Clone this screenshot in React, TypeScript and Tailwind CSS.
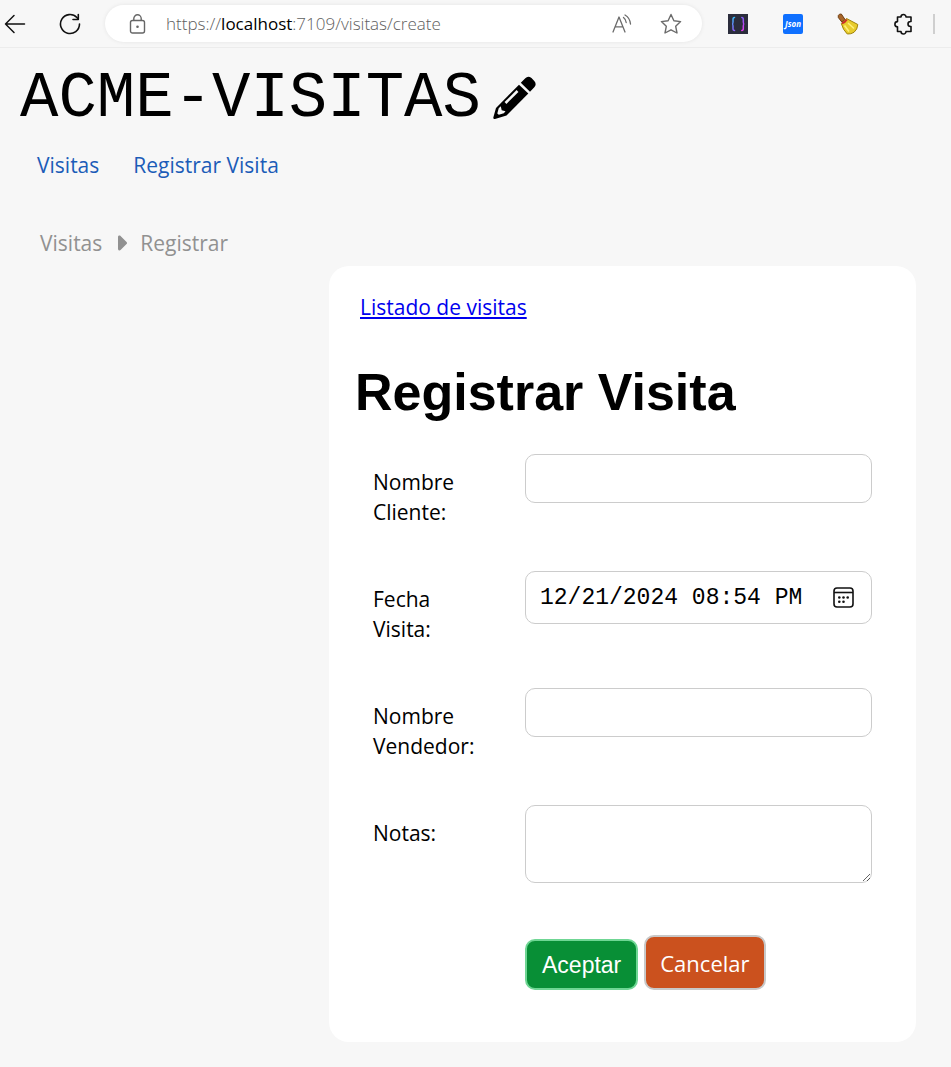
import React from "react";
import { FaCaretRight } from "react-icons/fa6";

function PencilIcon() {
  return (
    <svg className="ml-3 size-[43px]" viewBox="0 0 43 43" fill="none">
      <path d="M26 8.700 35.300 17.500 13.500 39.500 2 42.900Q0 43.300.400 41.300L3 32z" fill="#000" />
      <path d="M27.800 6.800 32.300 2.200Q35-.700 38.500 2L41.300 5Q44 8.200 41.300 11.200L37 15.700z" fill="#000" />
      <path d="M12.500 27 24.500 15" stroke="#f7f7f7" strokeWidth="2.600" />
      <path d="M5.700 32.300 7.800 30.300 8.700 34.300 12.500 35.300 10.800 37.300 5.800 38.800 4.300 37.500z" fill="#f7f7f7" />
    </svg>
  );
}

function BackIcon() {
  return (
    <svg width="22" height="22" viewBox="0 0 22 22" fill="none" stroke="#111" strokeWidth="1.5" strokeLinecap="round" strokeLinejoin="round">
      <path d="M20.5 11H1.5M10 2.5 1.5 11l8.500 8.500" />
    </svg>
  );
}

function ReloadIcon() {
  return (
    <svg width="22" height="22" viewBox="0 0 22 22" fill="none" stroke="#111" strokeWidth="1.6" strokeLinecap="round" strokeLinejoin="round">
      <path d="M20.500 11a9.500 9.500 0 1 1-2.600-6.500l1.300 1.500" />
      <path d="M19.300 1.500V6.500H14" />
    </svg>
  );
}

function LockIcon() {
  return (
    <svg width="17" height="20" viewBox="0 0 17 20" fill="none" stroke="#666" strokeWidth="1.400">
      <rect x="1.500" y="6.500" width="14" height="12.500" rx="2" />
      <path d="M4.800 6.500V4.500a3.700 3.700 0 0 1 7.400 0v2" />
      <circle cx="8.500" cy="12.700" r="1.300" fill="#666" stroke="none" />
    </svg>
  );
}

function ReadAloudIcon() {
  return (
    <svg width="20" height="20" viewBox="0 0 20 20" fill="none" stroke="#6b6b6b" strokeWidth="1.300" strokeLinecap="round" strokeLinejoin="round">
      <path d="M1 18 7 3l6 15M3.200 12.800h7.600" />
      <path d="M11.500 3.500c1.600 1.200 2.500 2.800 2.700 5M13 1c3.400 2 5.200 5 5.500 9" />
    </svg>
  );
}

function StarIcon() {
  return (
    <svg width="22" height="22" viewBox="0 0 22 22" fill="none" stroke="#6b6b6b" strokeWidth="1.400" strokeLinejoin="round">
      <path d="M11 1.500l2.900 6.200 6.700.9-4.900 4.700 1.300 6.700L11 16.800 5 20l1.300-6.700L1.400 8.600l6.700-.9z" />
    </svg>
  );
}

function BracesIcon() {
  return (
    <svg width="20" height="20" viewBox="0 0 20 20" fill="none" strokeWidth="1.500" strokeLinecap="round">
      <defs>
        <linearGradient id="braceLeft" x1="0" y1="3" x2="0" y2="17" gradientUnits="userSpaceOnUse">
          <stop offset="0" stopColor="#38bdf8" />
          <stop offset="1" stopColor="#8b5cf6" />
        </linearGradient>
        <linearGradient id="braceRight" x1="0" y1="3" x2="0" y2="17" gradientUnits="userSpaceOnUse">
          <stop offset="0" stopColor="#7c5cf6" />
          <stop offset="1" stopColor="#e935f0" />
        </linearGradient>
      </defs>
      <rect width="20" height="20" fill="#2b2d3c" />
      <path stroke="url(#braceLeft)" d="M6.500 3.500C5 3.500 5 4.500 5 5.500v2.500c0 1.200-.5 2-1 2 .5 0 1 .8 1 2v2.500c0 1 0 2 1.500 2" />
      <path stroke="url(#braceRight)" d="M13.800 3.500c1.500 0 1.500 1 1.500 2v2.500c0 1.200.5 2 1 2-.5 0-1 .8-1 2v2.500c0 1 0 2-1.500 2" />
    </svg>
  );
}

function BroomIcon() {
  return (
    <svg width="22" height="22" viewBox="0 0 22 22" strokeLinejoin="round">
      <path d="M1.300 2.500Q2 .8 4.300 1L8 6.500 4.800 9 1.300 4.500z" fill="#a8662a" stroke="#6e3f12" strokeWidth="1" />
      <path d="M4.300 10.500 9.500 5.500 20.800 11.500Q20.500 16.500 17 19.300 14 21.300 10.300 21 6 17 4.300 10.500z" fill="#e8cc2c" stroke="#a1840c" strokeWidth="1" />
      <path d="M7.500 12.500l4.500 6M11 10l6 5.500" fill="none" stroke="#fff07a" strokeWidth="1.600" />
      <path d="M5 10.300 Q8 9.500 9.800 6.500" fill="none" stroke="#c9302a" strokeWidth="2" />
    </svg>
  );
}

function PuzzleIcon() {
  return (
    <svg width="21" height="22" viewBox="0 0 21 22" fill="none" stroke="#111" strokeWidth="1.600" strokeLinejoin="round">
      <path d="M4.500 4H8a2.500 2.500 0 0 1 5 0h5v4.500h-.5a2.500 2.500 0 0 0 0 5H18V18.500h-5a2.500 2.500 0 0 1-5 0H4.500v-4.700a2.600 2.600 0 0 1 0-5.200z" />
    </svg>
  );
}

function CalendarIcon() {
  return (
    <svg width="21" height="21" viewBox="0 0 21 21" fill="none" stroke="#111" strokeWidth="1.600">
      <rect x="1" y="1" width="19" height="19" rx="3" />
      <path d="M1 5.500h19" />
      <g fill="#111" stroke="none">
        <circle cx="6.300" cy="10.500" r="1.300" />
        <circle cx="10.500" cy="10.500" r="1.300" />
        <circle cx="14.700" cy="10.500" r="1.300" />
        <circle cx="6.300" cy="14.700" r="1.300" />
        <circle cx="10.500" cy="14.700" r="1.300" />
      </g>
    </svg>
  );
}

function BrowserBar() {
  return (
    <header className="flex h-12 items-center border-b border-[#ececec] pl-1">
      <button type="button" aria-label="Back"><BackIcon /></button>
      <button type="button" aria-label="Refresh" className="ml-[33px]"><ReloadIcon /></button>
      <div className="ml-6 flex h-[37px] flex-1 items-center rounded-full bg-white pr-5 pl-6 shadow-[0_0_4px_rgba(0,0,0,0.08)]">
        <LockIcon />
        <div className="ml-5 flex-1 text-[17px] font-light text-[#606060]">
          https://<span className="font-normal text-black">localhost</span>:7109/visitas/create
        </div>
        <button type="button" aria-label="Read aloud"><ReadAloudIcon /></button>
        <button type="button" aria-label="Favorite" className="ml-7"><StarIcon /></button>
      </div>
      <div className="ml-[26px] flex items-center">
        <button type="button" aria-label="Braces extension"><BracesIcon /></button>
        <button type="button" className="ml-[35px] h-5 w-5 rounded-xs bg-[#0f70ff] text-center font-['Open_Sans',sans-serif] text-[8px] leading-5 font-bold text-white italic">Json</button>
        <button type="button" aria-label="Clean" className="ml-[34px]"><BroomIcon /></button>
        <button type="button" aria-label="Extensions" className="ml-[34px]"><PuzzleIcon /></button>
        <div className="mr-4 ml-[19px] h-5 w-0.5 bg-[#cfcfcf]" />
      </div>
    </header>
  );
}

function Field({ id, label, children }: { id: string; label: string; children: React.ReactNode }) {
  return (
    <div className="flex items-start">
      <label htmlFor={id} className="w-[152px] shrink-0 pt-[13px] pr-8">{label}</label>
      <div className="flex min-w-0 flex-1">{children}</div>
    </div>
  );
}

export default function App() {
  return (
    <div className="min-h-screen bg-[#f7f7f7] pb-6 font-['Open_Sans','Noto_Sans',sans-serif] text-[21px] leading-[30px] text-black">
      <BrowserBar />
      <div className="flex items-center pt-[15px] pl-5">
        <span className="pt-1 font-['Liberation_Mono',monospace] text-[64px] leading-[64px]">ACME-VISITAS</span>
        <PencilIcon />
      </div>
      <nav className="mt-[19px] flex gap-[34px] pl-[37px] text-[#1b5cb8]">
        <a href="#visitas">Visitas</a>
        <a href="#registrar">Registrar Visita</a>
      </nav>
      <div className="mt-12 flex items-center gap-[7px] pl-10 text-[#919191]">
        <span>Visitas</span>
        <FaCaretRight className="size-6" />
        <span>Registrar</span>
      </div>
      <main className="mt-2 mr-[35px] ml-[329px] rounded-[20px] bg-white pt-[26px] pb-[52px]">
        <a href="#listado" className="ml-[31px] text-[#0000ee] underline">Listado de visitas</a>
        <h1 className="mt-10 ml-[26px] font-['Liberation_Sans',sans-serif] text-[52px] leading-[60px] font-bold">Registrar Visita</h1>
        <form className="mt-8 px-11" onSubmit={(e) => e.preventDefault()}>
          <div className="flex flex-col gap-11">
            <Field id="cliente" label="Nombre Cliente:">
              <input id="cliente" type="text" className="h-[49px] w-full rounded-[10px] border border-[#cccccc] px-3.5" />
            </Field>
            <Field id="fecha" label="Fecha Visita:">
              <div className="flex h-[53px] w-full items-center rounded-[10px] border border-[#cccccc] pr-[17px] pl-3.5">
                <input id="fecha" type="text" defaultValue="12/21/2024 08:54 PM" className="min-w-0 flex-1 font-['Liberation_Mono',monospace] text-[23px]" />
                <button type="button" aria-label="Calendar"><CalendarIcon /></button>
              </div>
            </Field>
            <Field id="vendedor" label="Nombre Vendedor:">
              <input id="vendedor" type="text" className="h-[49px] w-full rounded-[10px] border border-[#cccccc] px-3.5" />
            </Field>
            <Field id="notas" label="Notas:">
              <textarea id="notas" className="h-[78px] w-full rounded-[10px] border border-[#cccccc] px-3.5 py-2" />
            </Field>
          </div>
          <div className="mt-[52px] flex items-end gap-1.5 pl-[152px] text-white">
            <button type="submit" className="h-[51px] rounded-[10px] border-2 border-[#6fd694] bg-[#088f36] px-[15px] font-['Liberation_Sans',sans-serif] text-[23px]">Aceptar</button>
            <a href="#visitas" className="h-[55px] rounded-[10px] border-2 border-[#c8c8c8] bg-[#cb511e] px-3.5 text-[22px] leading-[53px]">Cancelar</a>
          </div>
        </form>
      </main>
    </div>
  );
}
